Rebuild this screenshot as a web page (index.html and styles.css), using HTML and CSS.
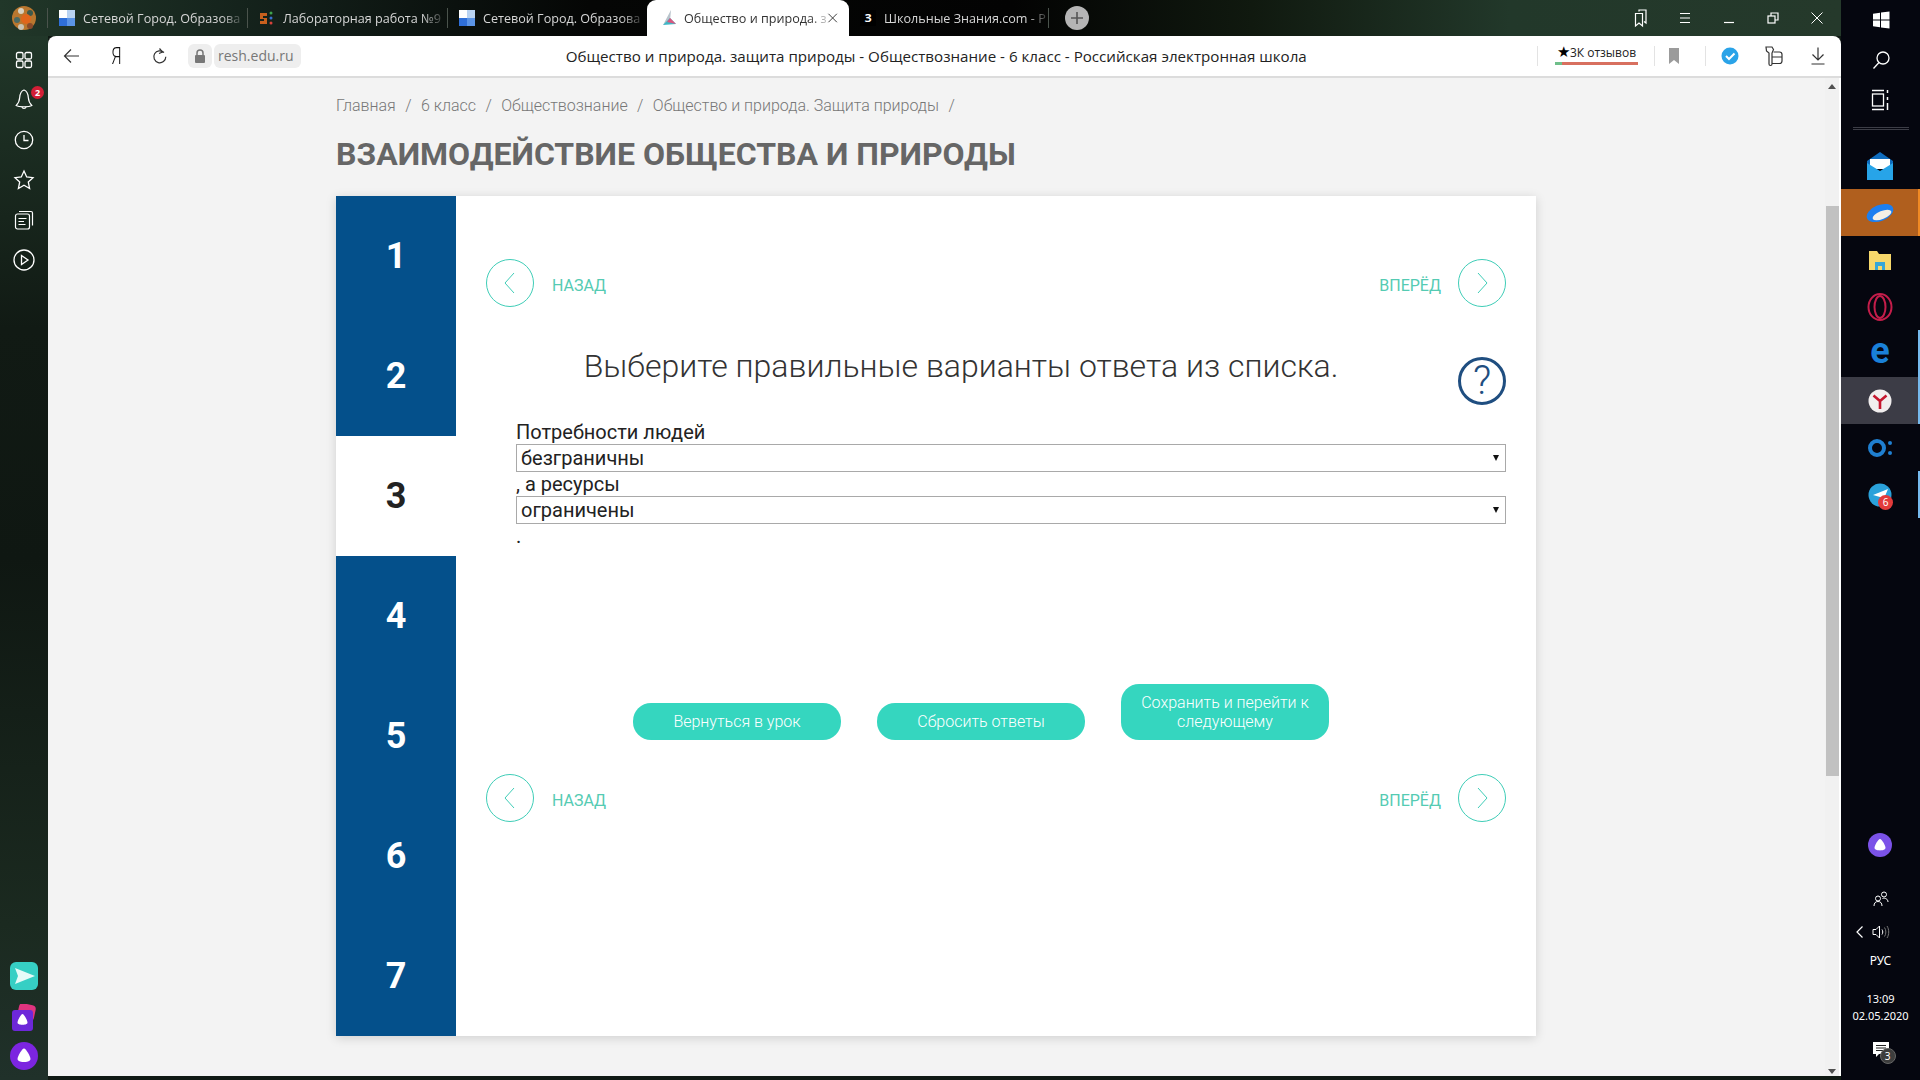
FILE: index.html
```html
<!DOCTYPE html>
<html lang="ru">
<head>
    <meta charset="UTF-8">
    <title>Общество и природа. защита природы</title>
    <link rel="stylesheet" href="styles.css">
</head>
<body>
    <div class="browser">
        <div class="tabbar">
            <div class="avatar">
                <svg width="24" height="24" viewBox="0 0 24 24"><circle cx="12" cy="12" r="12" fill="#b9772f"/><circle cx="9" cy="5" r="3" fill="#d9d2c0"/><circle cx="18" cy="7" r="3" fill="#3e5a4c"/><circle cx="5" cy="14" r="3" fill="#4b6a63"/><circle cx="14" cy="13" r="5" fill="#e0661c"/><circle cx="9" cy="21" r="3" fill="#c9c3b4"/><circle cx="18" cy="20" r="3" fill="#8a4a2a"/></svg>
            </div>
            <span class="sep"></span>
            <div class="tab">
                <svg class="favicon" viewBox="0 0 16 16"><rect width="16" height="16" fill="#fff"/><rect y="8" width="8" height="8" fill="#2f6fd8"/><rect x="8" width="8" height="8" fill="#b9d3f2"/><rect x="8" y="8" width="8" height="8" fill="#5b94e6"/></svg>
                <span class="tab-title">Сетевой Город. Образова</span>
            </div>
            <span class="sep"></span>
            <div class="tab">
                <svg class="favicon" viewBox="0 0 16 16"><path d="M1 3h7v3H4v2h4v6H1v-3h4V9H1z" fill="#c8601e"/><circle cx="12" cy="3" r="1.5" fill="#3fa34d"/><circle cx="12" cy="8" r="1.5" fill="#3b6fd1"/><circle cx="12" cy="13" r="1.5" fill="#d6423a"/></svg>
                <span class="tab-title">Лабораторная работа №9</span>
            </div>
            <span class="sep"></span>
            <div class="tab">
                <svg class="favicon" viewBox="0 0 16 16"><rect width="16" height="16" fill="#fff"/><rect y="8" width="8" height="8" fill="#2f6fd8"/><rect x="8" width="8" height="8" fill="#b9d3f2"/><rect x="8" y="8" width="8" height="8" fill="#5b94e6"/></svg>
                <span class="tab-title">Сетевой Город. Образова</span>
            </div>
            <div class="tab tab-active">
                <svg class="favicon" viewBox="0 0 16 16"><path d="M10 0 L2 15 L9 11z" fill="#b9c4cc"/><path d="M2 15 L15 14 L9 8z" fill="#3fb7c6"/><path d="M9 8 L15 14 L6 12z" fill="#d9577f"/></svg>
                <span class="tab-title">Общество и природа. з</span>
                <svg class="tab-close" width="12" height="12" viewBox="0 0 12 12"><path d="M1.5 1.5l9 9M10.5 1.5l-9 9" stroke="#333" stroke-width="1" fill="none"/></svg>
            </div>
            <div class="tab">
                <span class="favicon favicon-z">З</span>
                <span class="tab-title">Школьные Знания.com - Р</span>
            </div>
            <span class="sep"></span>
            <div class="new-tab">
                <svg width="24" height="24" viewBox="0 0 24 24"><circle cx="12" cy="12" r="12" fill="#b5b5b5"/><path d="M12 6v12M6 12h12" stroke="#555" stroke-width="1.6"/></svg>
            </div>
            <div class="window-btns">
                <div class="cell"><svg width="20" height="20" viewBox="0 0 20 20" fill="none" stroke="#fff" stroke-width="1.2"><path d="M8 3.500V2h7v13l-2-1.500"/><path d="M4.500 5.500h7v12.500l-3.500-3-3.500 3z"/></svg></div>
                <div class="cell"><svg width="14" height="14" viewBox="0 0 14 14" stroke="#fff" stroke-width="1.200"><path d="M2 2.500h10M2 7h10M2 11.500h10"/></svg></div>
                <div class="cell"><svg width="14" height="14" viewBox="0 0 14 14" stroke="#fff" stroke-width="1.200"><path d="M2 11.500h10"/></svg></div>
                <div class="cell"><svg width="14" height="14" viewBox="0 0 14 14" fill="none" stroke="#fff" stroke-width="1.200"><rect x="2" y="5" width="7" height="7"/><path d="M5 5V2h7v7H9"/></svg></div>
                <div class="cell"><svg width="14" height="14" viewBox="0 0 14 14" stroke="#fff" stroke-width="1"><path d="M1.500 1.500l11 11M12.500 1.500l-11 11"/></svg></div>
            </div>
        </div>

        <div class="browser-body">
            <div class="sidebar">
                <div class="side-icon"><svg width="24" height="24" viewBox="0 0 24 24" fill="none" stroke="#fff" stroke-width="1.300"><rect x="4.500" y="4.500" width="6.500" height="6.500" rx="1.500"/><rect x="13" y="4.500" width="6.500" height="6.500" rx="1.500"/><rect x="4.500" y="13" width="6.500" height="6.500" rx="1.500"/><rect x="13" y="13" width="6.500" height="6.500" rx="1.500"/></svg></div>
                <div class="side-icon">
                    <svg width="24" height="24" viewBox="0 0 24 24" fill="none" stroke="#fff" stroke-width="1.200"><path d="M12 2c-3 1-4 3.500-4.300 7.500-.2 3-1 5.500-3.500 8 1.500 1 5.500 1.300 7.800 1.300s6.300-.3 7.800-1.300c-2.500-2.500-3.300-5-3.500-8C16 5.500 15 3 12 2z"/><path d="M10 19c.3 2 3.700 2 4 0"/></svg>
                    <span class="side-badge">2</span>
                </div>
                <div class="side-icon"><svg width="24" height="24" viewBox="0 0 24 24" fill="none" stroke="#fff" stroke-width="1.300"><circle cx="12" cy="12" r="8.700"/><path d="M12 7v5.500h4.500"/></svg></div>
                <div class="side-icon"><svg width="24" height="24" viewBox="0 0 24 24" fill="none" stroke="#fff" stroke-width="1.300"><path d="M12 3l2.700 6 6.300.7-4.700 4.300 1.300 6.500-5.600-3.300-5.600 3.300 1.300-6.500L3 9.700 9.300 9z"/></svg></div>
                <div class="side-icon"><svg width="24" height="24" viewBox="0 0 24 24" fill="none" stroke="#fff" stroke-width="1.200"><rect x="3.500" y="6" width="14" height="15" rx="2"/><path d="M7 3.500h12a1.500 1.500 0 0 1 1.500 1.500v12.500"/><path d="M6.500 10.500h8M6.500 13.500h5.500M6.500 16.500h7"/></svg></div>
                <div class="side-icon"><svg width="24" height="24" viewBox="0 0 24 24" fill="none" stroke="#fff" stroke-width="1.300"><circle cx="12" cy="12" r="10"/><path d="M9.500 7.500l6.500 4.500-6.500 4.500z"/></svg></div>

                <div class="side-apps">
                    <div class="side-app"><svg width="28" height="28" viewBox="0 0 28 28"><rect width="28" height="28" rx="6" fill="#36cfc4"/><path d="M5 6l20 8-20 8 3-8z" fill="#e6fbf8"/></svg></div>
                    <div class="side-app side-app-mid"><svg width="28" height="28" viewBox="0 0 28 28"><rect x="8" y="0" width="17" height="16" rx="4" fill="#e0347f" transform="rotate(12 16 8)"/><rect x="2" y="6" width="21" height="21" rx="3" fill="#6d28d9"/><path d="M12.500 10c1.500 0 5 6.500 5 8.500 0 2-3.500 2.300-5 2.300s-5-.3-5-2.300c0-2 3.500-8.500 5-8.500z" fill="#fff"/></svg></div>
                    <div class="side-app"><svg width="28" height="28" viewBox="0 0 28 28"><circle cx="14" cy="14" r="14" fill="#7c25e0"/><path d="M14 6.500c2 0 6.500 8 6.500 10.500s-4.500 3-6.500 3-6.500-.5-6.500-3 4.500-10.500 6.500-10.500z" fill="#fff"/></svg></div>
                </div>
            </div>

            <div class="viewport">
                <div class="toolbar">
                    <div class="tool-left">
                        <div class="tool-cell"><svg width="20" height="20" viewBox="0 0 20 20" fill="none" stroke="#333" stroke-width="1.200"><path d="M17 10H3M9 3.500L2.500 10 9 16.500"/></svg></div>
                        <div class="tool-cell"><span class="yandex-y">Я</span></div>
                        <div class="tool-cell"><svg width="20" height="20" viewBox="0 0 20 20" fill="none" stroke="#333" stroke-width="1.200"><path d="M14 6.500a6 6 0 1 0 1.800 4.300"/><path d="M9.500 2.500l3 3.500-3.500 1.500"/></svg></div>
                        <div class="lock-pill"><svg width="12" height="14" viewBox="0 0 12 14"><path d="M3 6V4a3 3 0 0 1 6 0v2" fill="none" stroke="#777" stroke-width="1.500"/><rect x="1" y="6" width="10" height="8" rx="1" fill="#777"/></svg></div>
                        <div class="url-pill">resh.edu.ru</div>
                    </div>
                    <div class="page-title">Общество и природа. защита природы - Обществознание - 6 класс - Российская электронная школа</div>
                    <div class="tool-right">
                        <span class="tool-sep"></span>
                        <div class="rating">
                            <span class="rating-text"><span class="rating-star">★</span>3К отзывов</span>
                            <span class="rating-bar"></span>
                        </div>
                        <span class="tool-sep"></span>
                        <div class="bookmark-cell"><svg width="12" height="18" viewBox="0 0 12 18"><path d="M1 1h10v16l-5-4-5 4z" fill="#9b9b9b"/></svg></div>
                        <span class="tool-sep tool-sep-last"></span>
                        <div class="tool-cell"><svg width="20" height="20" viewBox="0 0 20 20"><circle cx="10" cy="10" r="8.500" fill="#2aa3e8"/><path d="M6 10l3 3 5.500-5.500" fill="none" stroke="#fff" stroke-width="2"/></svg></div>
                        <div class="tool-cell"><svg width="20" height="22" viewBox="0 0 20 22" fill="none" stroke="#333" stroke-width="1.200"><path d="M2 2h6l1.500 2.500L8 8v11a1.500 1.500 0 0 1-3 0V8L2.500 6z"/><path d="M9.500 7h6a2.500 2.500 0 0 1 2.500 2.500V16a2.500 2.500 0 0 1-2.500 2.500H8M8 12h10"/></svg></div>
                        <div class="tool-cell"><svg width="20" height="20" viewBox="0 0 20 20" fill="none" stroke="#333" stroke-width="1.200"><path d="M10 1.500V14M4.500 8.500L10 14l5.500-5.500M3.500 18h13"/></svg></div>
                    </div>
                </div>

                <div class="page-wrap">
                    <div class="page">
                        <div class="breadcrumbs">
                            <span>Главная</span><i>/</i><span>6 класс</span><i>/</i><span>Обществознание</span><i>/</i><span>Общество и природа. Защита природы</span><i>/</i>
                        </div>
                        <h1 class="lesson-title">Взаимодействие общества и природы</h1>

                        <div class="card">
                            <div class="steps">
                                <div class="step">1</div>
                                <div class="step">2</div>
                                <div class="step step-active">3</div>
                                <div class="step">4</div>
                                <div class="step">5</div>
                                <div class="step">6</div>
                                <div class="step">7</div>
                            </div>
                            <div class="task">
                                <div class="task-nav">
                                    <div class="nav-link">
                                        <span class="nav-circle"><svg width="48" height="48" viewBox="0 0 48 48" fill="none" stroke="#3fcdb7"><circle cx="24" cy="24" r="23.500"/><path d="M28 14L19 24l9 10"/></svg></span>
                                        <span class="nav-label">НАЗАД</span>
                                    </div>
                                    <div class="nav-link nav-link-next">
                                        <span class="nav-label">ВПЕРЁД</span>
                                        <span class="nav-circle"><svg width="48" height="48" viewBox="0 0 48 48" fill="none" stroke="#3fcdb7"><circle cx="24" cy="24" r="23.500"/><path d="M20 14l9 10-9 10"/></svg></span>
                                    </div>
                                </div>

                                <div class="task-head">
                                    <div class="task-title">Выберите правильные варианты ответа из списка.</div>
                                    <div class="help-btn">?</div>
                                </div>

                                <div class="task-form">
                                    <div class="form-line">Потребности людей</div>
                                    <div class="select-box">
                                        <select><option>безграничны</option></select>
                                    </div>
                                    <div class="form-line">, а ресурсы</div>
                                    <div class="select-box">
                                        <select><option>ограничены</option></select>
                                    </div>
                                    <div class="form-line">.</div>
                                </div>

                                <div class="task-btns">
                                    <button class="btn">Вернуться в урок</button>
                                    <button class="btn">Сбросить ответы</button>
                                    <button class="btn btn-tall">Сохранить и перейти к следующему</button>
                                </div>

                                <div class="task-nav task-nav-bottom">
                                    <div class="nav-link">
                                        <span class="nav-circle"><svg width="48" height="48" viewBox="0 0 48 48" fill="none" stroke="#3fcdb7"><circle cx="24" cy="24" r="23.500"/><path d="M28 14L19 24l9 10"/></svg></span>
                                        <span class="nav-label">НАЗАД</span>
                                    </div>
                                    <div class="nav-link nav-link-next">
                                        <span class="nav-label">ВПЕРЁД</span>
                                        <span class="nav-circle"><svg width="48" height="48" viewBox="0 0 48 48" fill="none" stroke="#3fcdb7"><circle cx="24" cy="24" r="23.500"/><path d="M20 14l9 10-9 10"/></svg></span>
                                    </div>
                                </div>
                            </div>
                        </div>
                    </div>
                    <div class="scrollbar">
                        <span class="scroll-up"></span>
                        <span class="scroll-thumb"></span>
                        <span class="scroll-down"></span>
                    </div>
                </div>
            </div>
        </div>
    </div>

    <div class="taskbar">
        <div class="task-sys"><svg width="20" height="20" viewBox="0 0 20 20" fill="#fff"><path d="M2 3.800l7-1v6.700H2zM10 2.600L18.500 1.500v8H10zM2 10.500h7v6.700l-7-1zM10 10.500h8.500v8L10 17.400z"/></svg></div>
        <div class="task-sys"><svg width="20" height="20" viewBox="0 0 20 20" fill="none" stroke="#fff" stroke-width="1.300"><circle cx="12" cy="8" r="6"/><path d="M8 12.500L2.500 18.500"/></svg></div>
        <div class="task-sys"><svg width="20" height="22" viewBox="0 0 20 22" fill="none" stroke="#fff" stroke-width="1.300"><path d="M1 1.500h12M1 20.500h12"/><rect x="1.500" y="5" width="11" height="12"/><path d="M16.500 1v3M16.500 8v3M16.500 14v7" stroke-width="1.500"/></svg></div>
        <div class="task-divider"></div>

        <div class="task-app"><svg width="26" height="28" viewBox="0 0 26 28"><path d="M13 0l13 9v7H0V9z" fill="#0f6cbd"/><path d="M3 7h20v10H3z" fill="#fff"/><path d="M0 11l13 8 13-8v17H0z" fill="#27a4e8"/></svg></div>
        <div class="task-app task-app-orange"><svg width="28" height="22" viewBox="0 0 28 22"><ellipse cx="14" cy="11" rx="14" ry="8" transform="rotate(-22 14 11)" fill="#1d7ff0"/><ellipse cx="16" cy="13" rx="10" ry="4" transform="rotate(-22 16 13)" fill="#f5f0e6"/></svg></div>
        <div class="task-app"><svg width="24" height="24" viewBox="0 0 24 24"><path d="M1 3h8l2 3h12v16H1z" fill="#f6d76b"/><path d="M7 14h10v8h-3v-4h-4v4H7z" fill="#35a6d8"/></svg></div>
        <div class="task-app"><svg width="26" height="28" viewBox="0 0 26 28" fill="none" stroke="#c41d4a" stroke-width="2"><ellipse cx="13" cy="14" rx="11.500" ry="13"/><ellipse cx="13" cy="14" rx="5.500" ry="11"/></svg></div>
        <div class="task-app task-app-mark"><span class="edge-e">e</span></div>
        <div class="task-app task-app-grey task-app-mark"><svg width="24" height="24" viewBox="0 0 24 24"><circle cx="12" cy="12" r="11.500" fill="#f1eeee"/><path d="M5.500 6.500L12 12l6.500-5.500M12 12v8" fill="none" stroke="#c5162e" stroke-width="2.600"/></svg></div>
        <div class="task-app"><svg width="26" height="22" viewBox="0 0 26 22" fill="none" stroke="#1f7fd0"><circle cx="10" cy="11" r="7" stroke-width="4"/><circle cx="23" cy="6" r="2" fill="#1f7fd0" stroke="none"/><circle cx="23" cy="16" r="2" fill="#1f7fd0" stroke="none"/></svg></div>
        <div class="task-app task-app-mark">
            <svg width="24" height="24" viewBox="0 0 24 24"><circle cx="12" cy="12" r="11.500" fill="#2aa1da"/><path d="M5 12l15-6-5 12-3-4z" fill="#fff"/></svg>
            <span class="tele-badge">6</span>
        </div>

        <div class="tray">
            <div class="tray-alice"><svg width="24" height="24" viewBox="0 0 24 24"><circle cx="12" cy="12" r="12" fill="#7b52e8"/><path d="M12 6c1.700 0 5.500 6.500 5.500 8.800s-3.800 2.600-5.500 2.600-5.500-.3-5.500-2.600S10.300 6 12 6z" fill="#fff"/></svg></div>
            <div class="tray-people"><svg width="16" height="16" viewBox="0 0 16 16" fill="none" stroke="#fff" stroke-width="1"><circle cx="5" cy="7.500" r="2.500"/><path d="M1 15c0-3 1.500-4.500 4-4.500S9 12 9 15"/><circle cx="11" cy="3.500" r="2.500"/><path d="M9.500 7.500c2.500-1 5.500.5 5.500 3.500"/></svg></div>
            <div class="tray-sound">
                <svg width="10" height="14" viewBox="0 0 10 14" fill="none" stroke="#fff" stroke-width="1.200"><path d="M8.500 1.500L3 7l5.500 5.500"/></svg>
                <svg width="18" height="16" viewBox="0 0 18 16" fill="none" stroke="#fff" stroke-width="1"><path d="M1 5.500h3L7.500 2v12L4 10.500H1z"/><path d="M10 5.500c1 1.500 1 3.500 0 5"/><path d="M12.500 3.500c1.800 2.500 1.800 6.500 0 9M15 2c2.300 3.500 2.300 8.500 0 12" stroke="#777"/></svg>
            </div>
            <div class="tray-lang">РУС</div>
            <div class="tray-clock">13:09<br>02.05.2020</div>
            <div class="tray-chat">
                <svg width="16" height="16" viewBox="0 0 16 16"><path d="M0 0h16v12H6l-3 3v-3H0z" fill="#fff"/><path d="M3 3.500h10M3 6h10M3 8.500h7" stroke="#222"/></svg>
                <span class="chat-badge">3</span>
            </div>
        </div>
    </div>
</body>
</html>
```

FILE: styles.css
```css
* {
    margin: 0;
    padding: 0;
    box-sizing: border-box;
}

body {
    width: 1920px;
    height: 1080px;
    display: flex;
    overflow: hidden;
    font-family: 'Open Sans', 'Noto Sans', sans-serif;
    background: #05060f;
}

.browser {
    width: 1841px;
    height: 1080px;
    display: flex;
    flex-direction: column;
    background: #101a14;
}

/* tab strip */
.tabbar {
    height: 36px;
    display: flex;
    align-items: center;
    flex-shrink: 0;
    background: linear-gradient(90deg, #213729 0%, #13201a 15%, #050605 32%, #030303 55%, #10190f 68%, #22382a 82%, #25392b 100%);
}

.avatar {
    width: 47px;
    display: flex;
    justify-content: center;
}

.sep {
    width: 1px;
    height: 20px;
    background: #4a534c;
}

.tab {
    width: 199px;
    height: 36px;
    display: flex;
    align-items: center;
    padding-left: 11px;
    color: #d6d6d6;
    font-size: 12.6px;
}

.tab-active {
    width: 202px;
    padding: 0 11px 0 14px;
    background: #fff;
    color: #333;
    border-radius: 9px 9px 0 0;
}

.favicon {
    width: 16px;
    height: 16px;
    flex-shrink: 0;
    margin-right: 8px;
}

.tab-active .favicon {
    margin-right: 7px;
}

.favicon-z {
    background: #000;
    color: #fff;
    font-size: 11px;
    font-weight: 700;
    line-height: 16px;
    text-align: center;
}

.tab-title {
    flex-shrink: 0;
    white-space: nowrap;
    -webkit-mask-image: linear-gradient(90deg, #000 88%, rgba(0,0,0,0.25) 100%);
    mask-image: linear-gradient(90deg, #000 88%, rgba(0,0,0,0.25) 100%);
}

.tab-close {
    margin-left: auto;
}

.new-tab {
    margin-left: 16px;
    display: flex;
}

.window-btns {
    margin-left: auto;
    padding-right: 2px;
    display: flex;
}

.cell {
    width: 44px;
    height: 36px;
    display: flex;
    align-items: center;
    justify-content: center;
}

/* left panel */
.browser-body {
    flex: 1;
    display: flex;
    min-height: 0;
}

.sidebar {
    width: 48px;
    flex-shrink: 0;
    display: flex;
    flex-direction: column;
    align-items: center;
    gap: 16px;
    padding: 12px 0 10px;
    background: linear-gradient(180deg, #213729 0%, #111a14 28%, #0f1712 50%, #1b2a20 85%, #20312a 100%);
}

.side-icon {
    position: relative;
    height: 24px;
    display: flex;
}

.side-badge {
    position: absolute;
    top: -2px;
    right: -8px;
    width: 13px;
    height: 13px;
    border-radius: 50%;
    background: #d21f36;
    color: #fff;
    font-size: 9px;
    font-weight: 700;
    line-height: 13px;
    text-align: center;
}

.side-apps {
    margin-top: auto;
    display: flex;
    flex-direction: column;
}

.side-app {
    height: 28px;
    display: flex;
}

.side-app-mid {
    margin: 14px 0 10px;
}

/* toolbar */
.viewport {
    flex: 1;
    min-width: 0;
    display: flex;
    flex-direction: column;
    padding-bottom: 4px;
}

.toolbar {
    height: 42px;
    display: flex;
    align-items: center;
    flex-shrink: 0;
    background: #fff;
    border-bottom: 2px solid #dcdcdc;
    border-radius: 8px 8px 0 0;
}

.tool-left {
    display: flex;
    align-items: center;
    padding-left: 2px;
}

.tool-cell {
    width: 44px;
    height: 40px;
    display: flex;
    align-items: center;
    justify-content: center;
}

.yandex-y {
    font-family: 'Roboto', sans-serif;
    font-weight: 300;
    font-size: 24px;
    color: #111;
    transform: scaleX(0.7);
}

.lock-pill {
    width: 24px;
    height: 24px;
    margin: 0 2px 0 6px;
    display: flex;
    align-items: center;
    justify-content: center;
    background: #eee;
    border-radius: 6px;
}

.url-pill {
    height: 24px;
    padding: 0 7px 0 4px;
    background: #eee;
    border-radius: 6px;
    color: #777;
    font-size: 14px;
    line-height: 24px;
}

.page-title {
    flex: 1;
    padding-left: 35px;
    text-align: center;
    color: #222;
    font-size: 15.15px;
    white-space: nowrap;
}

.tool-right {
    display: flex;
    align-items: center;
    padding-right: 1px;
}

.tool-sep {
    width: 1px;
    height: 20px;
    background: #e3e3e3;
}

.tool-sep-last {
    margin-right: 2px;
}

.rating {
    width: 83px;
    margin: 0 16px 4px 17px;
    display: flex;
    flex-direction: column;
    align-items: center;
}

.rating-text {
    color: #222;
    font-size: 12px;
    line-height: 16px;
    white-space: nowrap;
}

.rating-star {
    font-size: 15px;
    color: #000;
}

.rating-bar {
    width: 83px;
    height: 3px;
    margin-top: 1px;
    background: linear-gradient(90deg, #6fbf8a 0 9%, #d8705f 9% 100%);
}

.bookmark-cell {
    width: 50px;
    padding-right: 12px;
    display: flex;
    justify-content: center;
}

/* page */
.page-wrap {
    flex: 1;
    min-height: 0;
    display: flex;
    background: #f3f3f3;
}

.page {
    flex: 1;
    min-width: 0;
    padding-left: 288px;
}

.breadcrumbs {
    padding-top: 18px;
    color: #777;
    font-family: 'Roboto', sans-serif;
    font-weight: 300;
    font-size: 16px;
    line-height: 20px;
}

.breadcrumbs i {
    margin: 0 9.4px;
    font-style: normal;
}

.lesson-title {
    margin-top: 18px;
    color: #666;
    font-family: 'Roboto', sans-serif;
    font-size: 32px;
    font-weight: 700;
    line-height: 40px;
    text-transform: uppercase;
}

.card {
    width: 1200px;
    height: 840px;
    margin-top: 22px;
    display: flex;
    background: #fff;
    box-shadow: 0 2px 10px rgba(0,0,0,0.15);
    font-family: 'Roboto', sans-serif;
}

.steps {
    width: 120px;
    flex-shrink: 0;
    background: #04508b;
}

.step {
    height: 120px;
    display: flex;
    align-items: center;
    justify-content: center;
    color: #fff;
    font-size: 36px;
    font-weight: 700;
}

.step-active {
    background: #fff;
    color: #222;
}

.task {
    flex: 1;
    min-width: 0;
    padding: 63px 30px 0;
}

.task-nav {
    height: 48px;
    display: flex;
    justify-content: space-between;
}

.task-nav-bottom {
    margin-top: 34px;
}

.nav-link {
    display: flex;
    align-items: center;
    gap: 18px;
}

.nav-link-next {
    gap: 17px;
}

.nav-circle {
    display: flex;
}

.nav-label {
    color: #55cbb3;
    font-size: 16px;
    font-weight: 400;
    padding-top: 4px;
}

.task-head {
    margin-top: 41px;
    display: flex;
    align-items: flex-start;
    gap: 22px;
}

.task-title {
    flex: 1;
    color: #333;
    font-size: 32px;
    font-weight: 300;
    line-height: 36px;
    text-align: center;
}

.help-btn {
    width: 48px;
    height: 48px;
    margin-top: 9px;
    border: 3px solid #1f4e80;
    border-radius: 50%;
    color: #1f4e80;
    font-size: 40px;
    font-weight: 300;
    line-height: 42px;
    text-align: center;
}

.task-form {
    margin-top: 15px;
    margin-left: 30px;
    color: #222;
    font-size: 20px;
}

.form-line {
    height: 24px;
    line-height: 24px;
}

.select-box {
    position: relative;
    height: 28px;
}

.select-box select {
    width: 100%;
    height: 28px;
    padding-left: 4px;
    appearance: none;
    -webkit-appearance: none;
    background: #fff;
    border: 1px solid #a9a9a9;
    border-radius: 0;
    color: #222;
    font-family: 'Roboto', sans-serif;
    font-size: 20px;
}

/* small arrow drawn over the select */
.select-box::after {
    content: '';
    position: absolute;
    top: 11px;
    right: 7px;
    border-left: 3px solid transparent;
    border-right: 3px solid transparent;
    border-top: 6px solid #111;
}

.task-btns {
    margin-top: 136px;
    padding-left: 147px;
    display: flex;
    align-items: flex-end;
    gap: 36px;
}

.btn {
    width: 208px;
    height: 37px;
    border: none;
    border-radius: 18px;
    background: #35d6bf;
    color: #fff;
    font-family: 'Roboto', sans-serif;
    font-size: 16px;
    font-weight: 300;
    line-height: 19px;
}

.btn-tall {
    height: 56px;
    padding: 0 16px;
}

.scrollbar {
    position: relative;
    width: 16px;
    flex-shrink: 0;
    background: #f1f1f1;
    border-right: 2px solid #fff;
}

.scroll-up {
    position: absolute;
    top: 6px;
    left: 3px;
    border-left: 4px solid transparent;
    border-right: 4px solid transparent;
    border-bottom: 5px solid #505050;
}

.scroll-thumb {
    position: absolute;
    top: 128px;
    left: 1px;
    width: 13px;
    height: 570px;
    background: #c1c1c1;
}

.scroll-down {
    position: absolute;
    bottom: 2px;
    left: 3px;
    border-left: 4px solid transparent;
    border-right: 4px solid transparent;
    border-top: 5px solid #505050;
}

/* windows taskbar */
.taskbar {
    width: 79px;
    height: 1080px;
    flex-shrink: 0;
    display: flex;
    flex-direction: column;
    align-items: center;
    color: #fff;
    background: #05060f;
    font-family: 'Noto Sans', sans-serif;
}

.task-sys {
    width: 100%;
    height: 40px;
    display: flex;
    align-items: center;
    justify-content: center;
}

.task-divider {
    width: 56px;
    height: 3px;
    margin: 7px 0 12px;
    border-top: 1px solid #3c3d46;
    border-bottom: 1px solid #3c3d46;
}

.task-app {
    position: relative;
    width: 100%;
    height: 47px;
    padding-right: 1px;
    display: flex;
    align-items: center;
    justify-content: center;
}

.task-app-orange {
    background: #b05f1e;
    box-shadow: inset -2px 0 0 #f08a24;
}

.task-app-grey {
    background: #3c3c46;
}

.task-app-mark {
    box-shadow: inset -2px 0 0 #76b9ed;
}

.edge-e {
    color: #1a80d8;
    font-family: 'Roboto', sans-serif;
    font-size: 36px;
    font-weight: 700;
    line-height: 36px;
    margin-top: -6px;
}

.tele-badge {
    position: absolute;
    top: 24px;
    left: 37px;
    width: 15px;
    height: 15px;
    border-radius: 50%;
    background: #e33b3b;
    color: #fff;
    font-size: 10px;
    line-height: 15px;
    text-align: center;
}

.tray {
    margin-top: auto;
    width: 100%;
    padding-bottom: 12px;
    display: flex;
    flex-direction: column;
    align-items: center;
}

.tray-alice {
    height: 48px;
    padding-right: 1px;
    display: flex;
    align-items: center;
}

.tray-people {
    height: 30px;
    margin-top: 18px;
    padding-top: 4px;
    display: flex;
    align-items: flex-start;
}

.tray-sound {
    width: 100%;
    height: 30px;
    padding-left: 13px;
    display: flex;
    align-items: center;
    gap: 8px;
}

.tray-lang {
    height: 26px;
    font-size: 12px;
    line-height: 28px;
}

.tray-clock {
    margin-top: 17px;
    height: 34px;
    font-size: 11px;
    line-height: 17px;
    text-align: center;
    white-space: nowrap;
}

.tray-chat {
    position: relative;
    margin-top: 8px;
    height: 36px;
    display: flex;
    align-items: center;
}

.chat-badge {
    position: absolute;
    top: 16px;
    left: 7px;
    width: 16px;
    height: 16px;
    border-radius: 50%;
    background: #3d3d3d;
    border: 1px solid #666;
    color: #fff;
    font-size: 10px;
    line-height: 14px;
    text-align: center;
}
```
